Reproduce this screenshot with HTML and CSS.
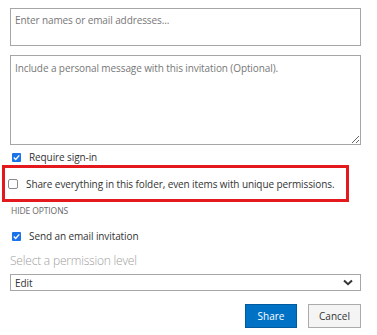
FILE: index.html
```html
<!DOCTYPE html>
<html lang="en">
<head>
    <meta charset="UTF-8">
    <title>Share</title>
    <link rel="stylesheet" href="styles.css">
</head>
<body>
    <form class="share-form">
        <div class="people-box">Enter names or email addresses...</div>

        <textarea class="message" placeholder="Include a personal message with this invitation (Optional)."></textarea>

        <label class="option option-signin">
            <span class="box checked">
                <svg width="9" height="9" viewBox="0 0 9 9"><path d="M1.8 4.6 L3.7 6.5 L7.3 2.4" fill="none" stroke="#fff" stroke-width="1.4"/></svg>
            </span>
            Require sign-in
        </label>

        <div class="highlight">
            <label class="option">
                <span class="box empty"></span>
                Share everything in this folder, even items with unique permissions.
            </label>
        </div>

        <div class="toggle">HIDE OPTIONS</div>

        <label class="option option-email">
            <span class="box checked">
                <svg width="9" height="9" viewBox="0 0 9 9"><path d="M1.8 4.6 L3.7 6.5 L7.3 2.4" fill="none" stroke="#fff" stroke-width="1.4"/></svg>
            </span>
            Send an email invitation
        </label>

        <div class="level-title">Select a permission level</div>
        <div class="select">
            <span>Edit</span>
            <svg width="10" height="7" viewBox="0 0 10 7"><path d="M1 1.5 L5 5.2 L9 1.5" fill="none" stroke="#333" stroke-width="2"/></svg>
        </div>

        <div class="buttons">
            <button type="button" class="btn btn-primary">Share</button>
            <button type="button" class="btn">Cancel</button>
        </div>
    </form>
</body>
</html>
```

FILE: styles.css
```css
* {
    margin: 0;
    padding: 0;
    box-sizing: border-box;
}
body {
    font-family: 'Open Sans', sans-serif;
    background-color: #fff;
    color: #333;
    font-size: 10px;
    letter-spacing: -0.1px;
}
.share-form {
    width: 361px;
    padding: 8px 0 0 10px;
}
.people-box {
    height: 38px;
    border: 1px solid #a6a6a6;
    padding: 3px 4px;
    color: #777;
    line-height: 16px;
}
.message {
    display: block;
    width: 100%;
    height: 90px;
    margin-top: 9px;
    border: 1px solid #a6a6a6;
    padding: 4px 4px;
    font-family: 'Open Sans', sans-serif;
    font-size: 10px;
    letter-spacing: -0.1px;
    line-height: 16px;
    color: #333;
    resize: vertical;
    outline: none;
}
.message::placeholder {
    color: #777;
}
.option {
    display: flex;
    align-items: center;
    gap: 8px;
    line-height: 14px;
    color: #333;
    white-space: nowrap;
}
.option-signin {
    margin-top: 5px;
    padding-left: 2px;
}
.box {
    display: inline-flex;
    align-items: center;
    justify-content: center;
    flex: none;
}
.box.checked {
    width: 9px;
    height: 9px;
    background-color: #1a73e8;
    border-radius: 1px;
}
.box.empty {
    width: 10px;
    height: 10px;
    border: 1px solid #8a8a8a;
    border-radius: 2px;
    background-color: #fff;
}
.highlight {
    margin: 1px 0 0 -8px;
    width: 347px;
    height: 37px;
    border: 3px solid #e3191d;
    display: flex;
    align-items: center;
    padding-left: 3px;
}
.toggle {
    margin-top: 2px;
    padding-left: 1px;
    font-size: 8.5px;
    color: #666;
    line-height: 14px;
}
.option-email {
    margin-top: 11px;
    padding-left: 2px;
}
.level-title {
    margin-top: 9px;
    font-size: 12px;
    letter-spacing: -0.2px;
    color: #a0a0a0;
    line-height: 18px;
    font-weight: 300;
}
.select {
    margin-top: 4px;
    height: 17px;
    border: 1px solid #a6a6a6;
    display: flex;
    align-items: center;
    justify-content: space-between;
    padding: 0 7px 0 4px;
    color: #333;
}
.buttons {
    display: flex;
    justify-content: flex-end;
    gap: 11px;
    margin-top: 13px;
}
.btn {
    height: 24px;
    width: 53px;
    border: 1px solid #ababab;
    background-color: #f4f4f4;
    font-family: 'Open Sans', sans-serif;
    font-size: 10px;
    color: #333;
}
.btn-primary {
    width: 52px;
    background-color: #0072c6;
    border-color: #005a9e;
    color: #fff;
}
```
